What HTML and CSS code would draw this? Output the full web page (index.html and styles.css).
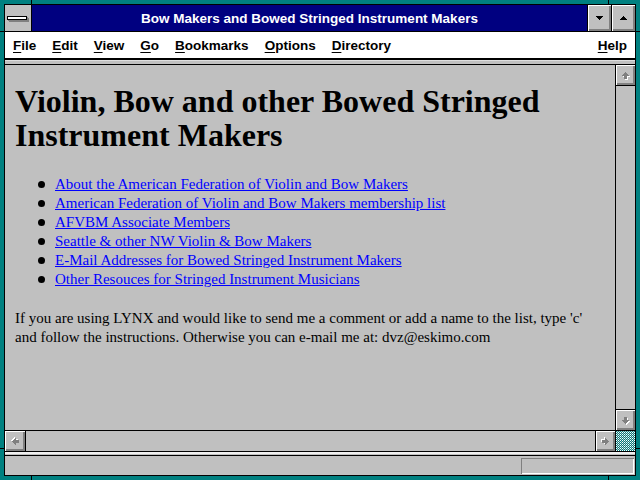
FILE: index.html
```html
<!DOCTYPE html>
<html>
<head>
<meta charset="utf-8">
<title>Bow Makers and Bowed Stringed Instrument Makers</title>
<link rel="stylesheet" href="styles.css">
</head>
<body>
<div class="window">
  <span class="notch nv ntl"></span>
  <span class="notch nv ntr"></span>
  <span class="notch nv nbl"></span>
  <span class="notch nv nbr"></span>
  <span class="notch nh nlt"></span>
  <span class="notch nh nlb"></span>
  <span class="notch nh nrt"></span>
  <span class="notch nh nrb"></span>
  <div class="frame">
    <div class="titlebar">
      <div class="sysbox"><span class="sysbar"></span></div>
      <div class="title">Bow Makers and Bowed Stringed Instrument Makers</div>
      <div class="tbtn"><svg width="7" height="4" viewBox="0 0 7 4"><path d="M0 0h7v1h-1v1h-1v1h-1v1h-1v-1h-1v-1h-1v-1h-1z" fill="#000"/></svg></div>
      <div class="tbtn"><svg width="7" height="4" viewBox="0 0 7 4"><path d="M0 0h7v1h-1v1h-1v1h-1v1h-1v-1h-1v-1h-1v-1h-1z" fill="#000" transform="rotate(180 3.5 2)"/></svg></div>
    </div>
    <div class="menubar">
      <span class="mi"><u>F</u>ile</span>
      <span class="mi"><u>E</u>dit</span>
      <span class="mi"><u>V</u>iew</span>
      <span class="mi"><u>G</u>o</span>
      <span class="mi"><u>B</u>ookmarks</span>
      <span class="mi"><u>O</u>ptions</span>
      <span class="mi"><u>D</u>irectory</span>
      <span class="mi mi-help"><u>H</u>elp</span>
    </div>
    <div class="band-top"></div>
    <div class="docrow">
      <div class="doc">
        <h1 class="heading">Violin, Bow and other Bowed Stringed Instrument Makers</h1>
        <ul class="links">
          <li><a href="#">About the American Federation of Violin and Bow Makers</a></li>
          <li><a href="#">American Federation of Violin and Bow Makers membership list</a></li>
          <li><a href="#">AFVBM Associate Members</a></li>
          <li><a href="#">Seattle &amp; other NW Violin &amp; Bow Makers</a></li>
          <li><a href="#">E-Mail Addresses for Bowed Stringed Instrument Makers</a></li>
          <li><a href="#">Other Resouces for Stringed Instrument Musicians</a></li>
        </ul>
        <p class="note">If you are using LYNX and would like to send me a comment or add a name to the list, type 'c' and follow the instructions. Otherwise you can e-mail me at: dvz@eskimo.com</p>
      </div>
      <div class="vscroll">
        <div class="sbtn sbtn-up"><svg width="19" height="19" viewBox="0 0 19 19"><path d="M9 6h1v1h1v1h1v1h1v1h-2v3h-3v-3h-2v-1h1v-1h1v-1h1z" fill="#fff" transform="translate(1 1)"/><path d="M9 6h1v1h1v1h1v1h1v1h-2v3h-3v-3h-2v-1h1v-1h1v-1h1z" fill="#808080"/></svg></div>
        <div class="vtrack"></div>
        <div class="sbtn sbtn-down"><svg width="19" height="19" viewBox="0 0 19 19"><g transform="rotate(180 9.5 9.5)"><path d="M9 6h1v1h1v1h1v1h1v1h-2v3h-3v-3h-2v-1h1v-1h1v-1h1z" fill="#fff" transform="translate(-1 -1)"/><path d="M9 6h1v1h1v1h1v1h1v1h-2v3h-3v-3h-2v-1h1v-1h1v-1h1z" fill="#808080"/></g></svg></div>
      </div>
    </div>
    <div class="hscroll">
      <div class="sbtn hbtn-left"><svg width="19" height="19" viewBox="0 0 19 19"><g transform="rotate(-90 9.5 9.5)"><path d="M9 6h1v1h1v1h1v1h1v1h-2v3h-3v-3h-2v-1h1v-1h1v-1h1z" fill="#fff" transform="translate(1 -1)"/><path d="M9 6h1v1h1v1h1v1h1v1h-2v3h-3v-3h-2v-1h1v-1h1v-1h1z" fill="#808080"/></g></svg></div>
      <div class="htrack"></div>
      <div class="sbtn hbtn-right"><svg width="19" height="19" viewBox="0 0 19 19"><g transform="rotate(90 9.5 9.5)"><path d="M9 6h1v1h1v1h1v1h1v1h-2v3h-3v-3h-2v-1h1v-1h1v-1h1z" fill="#fff" transform="translate(-1 1)"/><path d="M9 6h1v1h1v1h1v1h1v1h-2v3h-3v-3h-2v-1h1v-1h1v-1h1z" fill="#808080"/></g></svg></div>
      <div class="corner"><svg width="19" height="20"><defs><pattern id="dither" width="2" height="2" patternUnits="userSpaceOnUse"><rect width="2" height="2" fill="#c0c0c0"/><rect width="1" height="1" fill="#008080"/><rect x="1" y="1" width="1" height="1" fill="#008080"/><rect y="1" width="1" height="1" fill="#ffffff"/></pattern></defs><rect width="19" height="20" fill="url(#dither)"/></svg></div>
    </div>
    <div class="band-bottom"></div>
    <div class="status"><div class="status-box"></div></div>
  </div>
</div>
</body>
</html>
```
FILE: styles.css
```css
html, body {
  margin: 0;
  padding: 0;
  background: #008080;
}
body {
  width: 640px;
  height: 480px;
  overflow: hidden;
}
.window {
  position: relative;
  width: 640px;
  height: 480px;
  box-sizing: border-box;
  border: 4px solid #008080;
}
.notch {
  position: absolute;
  background: #000;
}
.nv { width: 1px; height: 4px; }
.nh { width: 4px; height: 1px; }
.ntl { top: -4px; left: 27px; }
.ntr { top: -4px; left: 604px; }
.nbl { bottom: -4px; left: 27px; }
.nbr { bottom: -4px; left: 604px; }
.nlt { left: -4px; top: 27px; }
.nlb { left: -4px; top: 444px; }
.nrt { right: -4px; top: 27px; }
.nrb { right: -4px; top: 444px; }

.frame {
  height: 100%;
  box-sizing: border-box;
  border: 1px solid #000;
  display: flex;
  flex-direction: column;
  background: #c0c0c0;
}

/* title bar */
.titlebar {
  flex: none;
  height: 26px;
  display: flex;
  border-bottom: 1px solid #000;
}
.sysbox {
  border-right: 1px solid #000;
  background: #c0c0c0;
  display: flex;
  align-items: center;
  padding-left: 2px;
  box-sizing: border-box;
  width: 27px;
}
.sysbar {
  display: block;
  width: 18px;
  height: 2px;
  background: #fff;
  border: 1px solid #000;
  box-shadow: 1px 1px 0 #808080, 2px 2px 0 #808080;
}
.title {
  flex: 1;
  background: #000080;
  color: #fff;
  font: bold 13.5px "Liberation Sans", Arial, sans-serif;
  display: flex;
  align-items: center;
  justify-content: center;
  padding-top: 1px;
}
.tbtn {
  width: 23px;
  border-left: 1px solid #000;
  background: #c0c0c0;
  box-shadow: inset 1px 1px 0 #fff, inset -1px -1px 0 #808080, inset -2px -2px 0 #808080;
  display: flex;
  align-items: center;
  justify-content: center;
}
.tbtn svg { display: block; margin: 0 1px 1px 0; }

/* menu bar */
.menubar {
  flex: none;
  height: 26px;
  background: #fff;
  border-bottom: 2px solid #000;
  display: flex;
  align-items: center;
  font: bold 13.5px "Liberation Sans", Arial, sans-serif;
  color: #000;
}
.mi {
  padding: 0 8px;
}
.mi u {
  text-underline-offset: 2px;
}
.mi-help {
  margin-left: auto;
}

.band-top {
  flex: none;
  height: 4px;
  background: #c0c0c0;
  box-shadow: inset 0 1px 0 #dfdfdf;
  border-bottom: 1px solid #000;
}

/* document */
.docrow {
  flex: 1;
  display: flex;
  min-height: 0;
}
.doc {
  flex: 1;
  min-width: 0;
  overflow: hidden;
  background: #c0c0c0;
  padding: 0 10px;
  font-family: "Liberation Serif", "Times New Roman", serif;
  color: #000;
}
.heading {
  font-size: 32px;
  font-weight: bold;
  line-height: 34px;
  margin: 19px 0 23px;
}
.links {
  list-style: none;
  margin: 0;
  padding: 0 0 0 40px;
  font-size: 15px;
  line-height: 19px;
}
.links li::before {
  content: "";
  display: inline-block;
  width: 7px;
  height: 7px;
  border-radius: 50%;
  background: #000;
  margin-left: -17px;
  margin-right: 10px;
  vertical-align: 1px;
}
.links a {
  color: #0000ff;
  text-decoration: underline;
}
.note {
  margin: 20px 0 0;
  font-size: 15px;
  line-height: 19px;
}

/* scrollbars */
.sbtn {
  background: #c0c0c0;
  box-shadow: inset 1px 1px 0 #fff, inset -1px -1px 0 #808080, inset -2px -2px 0 #808080;
  display: flex;
  align-items: center;
  justify-content: center;
}
.sbtn svg { display: block; }
.vscroll {
  flex: none;
  width: 19px;
  border-left: 1px solid #000;
  display: flex;
  flex-direction: column;
}
.sbtn-up {
  height: 20px;
  border-bottom: 1px solid #000;
}
.vtrack { flex: 1; background: #c0c0c0; }
.sbtn-down {
  height: 20px;
  border-top: 1px solid #000;
}
.hscroll {
  flex: none;
  height: 20px;
  border-top: 1px solid #000;
  border-bottom: 1px solid #000;
  display: flex;
}
.hbtn-left {
  width: 20px;
  border-right: 1px solid #000;
}
.htrack { flex: 1; background: #c0c0c0; }
.hbtn-right {
  width: 19px;
  border-left: 1px solid #000;
}
.corner {
  width: 19px;
  border-left: 1px solid #000;
}
.corner svg { display: block; }

.band-bottom {
  flex: none;
  height: 3px;
  background: #c0c0c0;
  box-shadow: inset 0 2px 0 #f0f0f0;
  border-bottom: 1px solid #000;
}
.status {
  flex: none;
  height: 19px;
  box-sizing: border-box;
  padding: 2px 1px 1px 0;
  display: flex;
  justify-content: flex-end;
}
.status-box {
  width: 113px;
  box-shadow: inset 1px 1px 0 #808080, inset -1px -1px 0 #fff;
}
```
